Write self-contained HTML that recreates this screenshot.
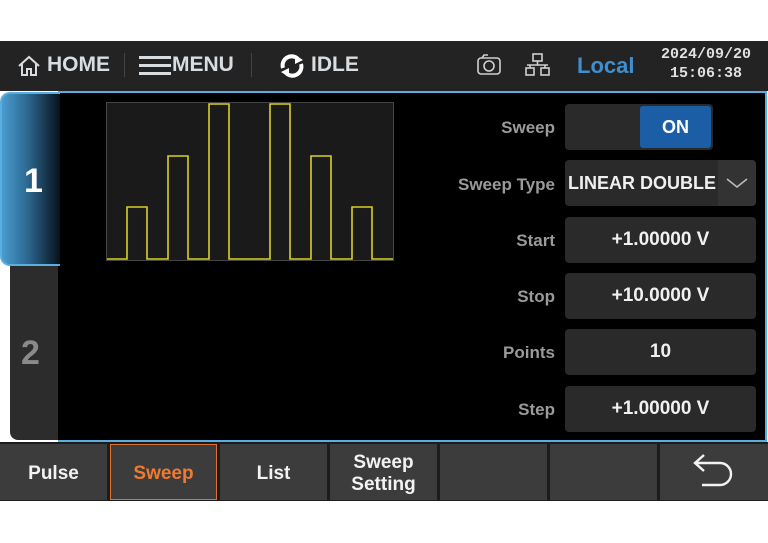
<!DOCTYPE html>
<html><head><style>
*{margin:0;padding:0;box-sizing:border-box}
body{width:768px;height:543px;background:#fff;position:relative;overflow:hidden;font-family:"Liberation Sans",sans-serif;font-weight:bold}
.a{position:absolute}
#hdr{left:0;top:41px;width:768px;height:50px;background:#232323}
.ht{color:#d8dde2;font-size:21px;top:53px}
.sep{top:53px;width:1px;height:24px;background:#444}
#main{left:58px;top:91px;width:709px;height:351px;background:#000;border:2px solid #5aaee0;border-left:none}
#t1{left:0;top:92px;width:60px;height:174px;border-radius:10px 0 0 10px;background:linear-gradient(90deg,#4a9cd0 0%,#2f6e98 40%,#08121c 100%);border:2px solid #5aaee0;border-right:none;color:#fff;font-size:34px;padding:68px 0 0 22px}
#t2{left:10px;top:266px;width:48px;height:174px;background:#2c2c2c;border-radius:0 0 0 8px;color:#8a8a8a;font-size:34px;padding:68px 0 0 11px}
.lb{color:#9a9a9a;font-size:17px;text-align:right;width:200px;left:355px}
.bx{left:565px;width:191px;height:46px;background:#2a2a2a;border-radius:4px;color:#f0f0f0;font-size:19px;text-align:center;line-height:46px}
#bar{left:0;top:442px;width:768px;height:59px;background:#1c1c1c}
.b{top:444px;width:107px;height:56px;background:#3c3c3c;color:#f2f2f2;font-size:19px;text-align:center;display:flex;align-items:center;justify-content:center;line-height:22px;padding-top:4px}
</style></head><body>
<div class="a" id="hdr"></div>
<svg class="a" style="left:16px;top:54px" width="26" height="24" viewBox="0 0 26 24"><path d="M3 12 L13 3 L23 12 M6 10 V21 H11 V15 H15 V21 H20 V10" fill="none" stroke="#d8dde2" stroke-width="2"/></svg>
<div class="a ht" style="left:47px">HOME</div>
<div class="a sep" style="left:124px"></div>
<svg class="a" style="left:139px;top:55px" width="32" height="22"><rect x="0" y="1" width="32" height="3" fill="#d8dde2"/><rect x="0" y="9" width="32" height="3" fill="#d8dde2"/><rect x="0" y="17" width="32" height="3" fill="#d8dde2"/></svg>
<div class="a ht" style="left:172px">MENU</div>
<div class="a sep" style="left:251px"></div>
<svg class="a" style="left:278px;top:54px" width="28" height="24" viewBox="0 0 28 24"><path d="M5 14 A9 9 0 0 1 20 5" fill="none" stroke="#fff" stroke-width="4"/><path d="M17 1 L25 6 L17 10Z" fill="#fff"/><path d="M23 10 A9 9 0 0 1 8 19" fill="none" stroke="#fff" stroke-width="4"/><path d="M11 23 L3 18 L11 14Z" fill="#fff"/></svg>
<div class="a ht" style="left:311px">IDLE</div>
<svg class="a" style="left:476px;top:54px" width="26" height="22"><rect x="2" y="4" width="22" height="16" rx="3" fill="none" stroke="#d0d0d0" stroke-width="1.6"/><circle cx="13" cy="12" r="5" fill="none" stroke="#d0d0d0" stroke-width="1.6"/><path d="M6 4 L8 1 H12" fill="none" stroke="#d0d0d0" stroke-width="1.6"/></svg>
<svg class="a" style="left:525px;top:53px" width="26" height="24"><rect x="8" y="1" width="9" height="7" fill="none" stroke="#d0d0d0" stroke-width="1.6"/><path d="M12.5 8 V12 M2 12 H23 M5 12 V15 M20 12 V15" stroke="#d0d0d0" stroke-width="1.6"/><rect x="1" y="15" width="8" height="7" fill="none" stroke="#d0d0d0" stroke-width="1.6"/><rect x="16" y="15" width="8" height="7" fill="none" stroke="#d0d0d0" stroke-width="1.6"/></svg>
<div class="a" style="left:577px;top:53px;color:#3f8fd0;font-size:22px">Local</div>
<div class="a" style="left:652px;top:45px;color:#e0e0e0;font-size:15px;font-family:'Liberation Mono',monospace;text-align:center;line-height:19px;width:108px">2024/09/20<br>15:06:38</div>

<div class="a" id="main"></div>
<div class="a" id="t1">1</div>
<div class="a" id="t2">2</div>

<svg class="a" style="left:106px;top:102px" width="288" height="160"><rect x="0.5" y="0.5" width="287" height="158" fill="#1a1a1a" stroke="#444"/>
<path d="M1 157 H21 V105 H41 V157 H62 V54 H82 V157 H103 V2 H123 V157 H164 V2 H184 V157 H205 V54 H225 V157 H246 V105 H266 V157 H287" fill="none" stroke="#d8d020" stroke-width="1.6"/></svg>

<div class="a lb" style="top:118px">Sweep</div>
<div class="a bx" style="top:104px;width:148px"></div>
<div class="a" style="left:640px;top:106px;width:71px;height:42px;background:#1c5ea6;border-radius:3px;color:#fff;font-size:18px;text-align:center;line-height:42px">ON</div>
<div class="a lb" style="top:175px">Sweep Type</div>
<div class="a bx" style="top:160px;text-align:left;padding-left:3px;font-size:18px">LINEAR DOUBLE</div>
<div class="a" style="left:718px;top:160px;width:38px;height:46px;background:#333;border-radius:0 4px 4px 0"></div>
<svg class="a" style="left:725px;top:176px" width="24" height="14"><path d="M2 3 L12 11 L22 3" fill="none" stroke="#bbb" stroke-width="1.6"/></svg>
<div class="a lb" style="top:231px">Start</div>
<div class="a bx" style="top:217px">+1.00000 V</div>
<div class="a lb" style="top:287px">Stop</div>
<div class="a bx" style="top:273px">+10.0000 V</div>
<div class="a lb" style="top:343px">Points</div>
<div class="a bx" style="top:329px">10</div>
<div class="a lb" style="top:400px">Step</div>
<div class="a bx" style="top:386px">+1.00000 V</div>

<div class="a" id="bar"></div>
<div class="a b" style="left:0">Pulse</div>
<div class="a b" style="left:110px;border:1px solid #e07030;color:#f07a30">Sweep</div>
<div class="a b" style="left:220px">List</div>
<div class="a b" style="left:330px">Sweep<br>Setting</div>
<div class="a b" style="left:440px"></div>
<div class="a b" style="left:550px"></div>
<div class="a b" style="left:660px;width:108px;padding-top:0"><svg width="48" height="44"><path d="M14 5 L5 13 L14 21 M5 13 H30 A11 11 0 0 1 30 35 H12" fill="none" stroke="#f2f2f2" stroke-width="2.4"/></svg></div>
</body></html>
